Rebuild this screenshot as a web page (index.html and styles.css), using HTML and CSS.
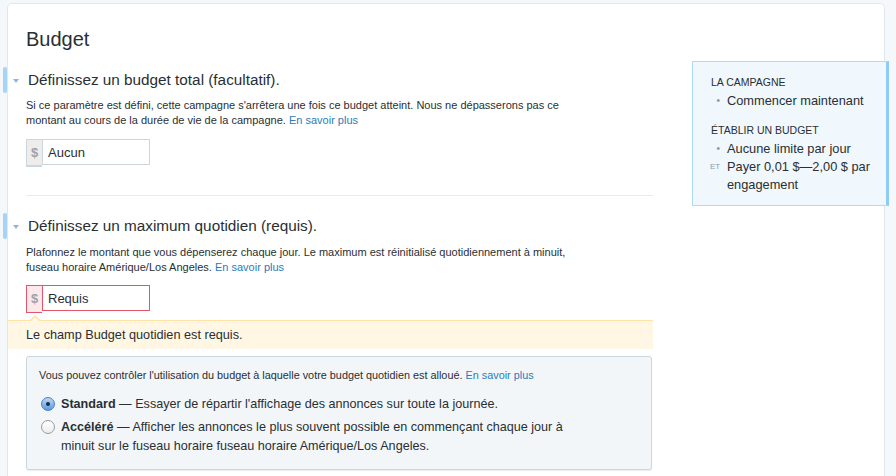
FILE: index.html
```html
<!DOCTYPE html>
<html lang="fr">
<head>
    <meta charset="UTF-8">
    <meta name="viewport" content="width=device-width, initial-scale=1.0">
    <title>Budget</title>
    <link rel="stylesheet" href="styles.css">
</head>
<body>
    <div class="card">
        <div class="card-body">
            <div class="main">
                <h1>Budget</h1>

                <div class="section">
                    <h2 class="section-title">Définissez un budget total (facultatif).</h2>
                    <p class="help">Si ce paramètre est défini, cette campagne s'arrêtera une fois ce budget atteint. Nous ne dépasserons pas ce montant au cours de la durée de vie de la campagne. <a href="#">En savoir plus</a></p>
                    <div class="money-input">
                        <span class="addon">$</span>
                        <input type="text" value="Aucun">
                    </div>
                </div>

                <hr class="divider">

                <div class="section section-daily">
                    <h2 class="section-title">Définissez un maximum quotidien (requis).</h2>
                    <p class="help">Plafonnez le montant que vous dépenserez chaque jour. Le maximum est réinitialisé quotidiennement à minuit, fuseau horaire Amérique/Los Angeles. <a href="#">En savoir plus</a></p>
                    <div class="money-input invalid">
                        <span class="addon">$</span>
                        <input type="text" value="Requis">
                    </div>
                </div>

                <div class="field-error">Le champ Budget quotidien est requis.</div>

                <div class="pacing">
                    <p class="pacing-intro">Vous pouvez contrôler l'utilisation du budget à laquelle votre budget quotidien est alloué. <a href="#">En savoir plus</a></p>
                    <label class="radio-row">
                        <span class="radio checked"></span>
                        <span><b>Standard</b> — Essayer de répartir l'affichage des annonces sur toute la journée.</span>
                    </label>
                    <label class="radio-row">
                        <span class="radio"></span>
                        <span><b>Accéléré</b> — Afficher les annonces le plus souvent possible en commençant chaque jour à minuit sur le fuseau horaire fuseau horaire Amérique/Los Angeles.</span>
                    </label>
                </div>
            </div>

            <aside class="summary">
                <h3>La campagne</h3>
                <ul>
                    <li><span class="mark">•</span>Commencer maintenant</li>
                </ul>
                <h3>Établir un budget</h3>
                <ul>
                    <li><span class="mark">•</span>Aucune limite par jour</li>
                    <li><span class="mark et">ET</span>Payer 0,01 $—2,00 $ par engagement</li>
                </ul>
            </aside>
        </div>
    </div>
</body>
</html>
```

FILE: styles.css
```css
body {
    font-family: "Liberation Sans", Arial, sans-serif;
    margin: 0;
    padding: 3px 11px 0 7px;
    background-color: #f5f8fa;
    color: #292f33;
}
a {
    color: #2b7bb9;
    text-decoration: none;
}
.card {
    background-color: white;
    border: 1px solid #e1e8ed;
    border-bottom: none;
    border-radius: 5px 5px 0 0;
    min-height: 480px;
}
.card-body {
    display: flex;
    align-items: flex-start;
}
.main {
    width: 645px;
    padding-top: 23px;
}
h1 {
    margin: 0 0 19px 18px;
    font-size: 20px;
    line-height: 24px;
    font-weight: normal;
}
.section {
    padding-left: 18px;
}
.section-title {
    position: relative;
    margin: 0 0 8px 2px;
    font-size: 15.3px;
    line-height: 20px;
    font-weight: normal;
}
/* blue marker on the card edge */
.section-title::before {
    content: "";
    position: absolute;
    left: -25px;
    top: -3px;
    width: 4px;
    height: 26px;
    border-radius: 2px;
    background-color: #a6d4f5;
}
/* collapse caret */
.section-title::after {
    content: "";
    position: absolute;
    left: -15px;
    top: 9px;
    border-left: 3.5px solid transparent;
    border-right: 3.5px solid transparent;
    border-top: 4px solid #8fb6d6;
}
.help {
    margin: 0;
    max-width: 545px;
    font-size: 11px;
    line-height: 14.5px;
}
.section-daily .help {
    margin-top: 9px;
}
.money-input {
    display: flex;
    align-items: flex-start;
    width: 124px;
    margin-top: 12px;
}
.section-daily .money-input {
    margin-top: 11px;
}
.addon {
    width: 16px;
    height: 27px;
    box-sizing: border-box;
    border: 1px solid #ccd6dd;
    border-right: none;
    background-color: #efecec;
    color: #99a4ad;
    font-weight: bold;
    font-size: 13px;
    line-height: 26px;
    text-align: center;
    margin-bottom: -2px;
    box-shadow: 0 1px 0 #ccd6dd;
}
.money-input input {
    flex: 1;
    min-width: 0;
    height: 26px;
    box-sizing: border-box;
    border: 1px solid #ccd6dd;
    padding: 0 5px;
    font-family: inherit;
    font-size: 13px;
    color: #292f33;
    outline: none;
}
.money-input.invalid .addon {
    border-color: #e0566b;
    background-color: #fde8ec;
    box-shadow: none;
    height: 28px;
}
.money-input.invalid input {
    border-color: #e0566b;
}
.divider {
    margin: 30px 0 20px 18px;
    border: none;
    border-top: 1px solid #e6ecf0;
}
.field-error {
    position: relative;
    margin-top: 9px;
    padding: 6px 18px 0;
    height: 22px;
    background-color: #fff6e4;
    border-top: 1px solid #fde3a6;
    font-size: 12.7px;
    line-height: 16px;
}
/* little notch pointing at the field */
.field-error::before {
    content: "";
    position: absolute;
    left: 22px;
    top: -6px;
    border-left: 5px solid transparent;
    border-right: 5px solid transparent;
    border-bottom: 5px solid #fde3a6;
}
.field-error::after {
    content: "";
    position: absolute;
    left: 23px;
    top: -4px;
    border-left: 4px solid transparent;
    border-right: 4px solid transparent;
    border-bottom: 4px solid #fff6e4;
}
.pacing {
    margin: 7px 1px 0 18px;
    padding: 11px 58px 13px 12px;
    background-color: #f3f6f9;
    border: 1px solid #ccd6dd;
    border-radius: 3px;
    box-shadow: 0 1px 1px rgba(0, 0, 0, 0.08);
}
.pacing-intro {
    margin: 0 0 12px;
    font-size: 10.85px;
    line-height: 15px;
    white-space: nowrap;
}
.radio-row {
    display: flex;
    align-items: flex-start;
    gap: 6px;
    font-size: 12.6px;
    line-height: 19px;
    margin-bottom: 4px;
}
.radio-row:last-child {
    margin-bottom: 0;
}
.radio-row b {
    font-weight: bold;
}
.radio {
    flex: none;
    position: relative;
    width: 14px;
    height: 14px;
    margin: 2px 0 0 2px;
    box-sizing: border-box;
    border: 1px solid #9a9a9a;
    border-radius: 50%;
    background: linear-gradient(#ffffff, #ececec);
}
.radio.checked {
    border-color: #4a7fbf;
    background: linear-gradient(#bcd8f6, #5c9ae3);
}
.radio.checked::after {
    content: "";
    position: absolute;
    left: 4px;
    top: 4px;
    width: 4px;
    height: 4px;
    border-radius: 50%;
    background-color: #1d2a38;
}
.summary {
    flex: none;
    width: 197px;
    box-sizing: border-box;
    margin: 57px -5px 0 auto;
    padding: 13px 12px 11px 18px;
    background-color: #f0f7fd;
    border: 1px solid #b2dbf7;
    border-right: 3px solid #8ecbf6;
}
.summary h3 {
    margin: 0 0 3px;
    font-size: 10.5px;
    line-height: 14px;
    font-weight: normal;
    text-transform: uppercase;
}
.summary ul {
    list-style: none;
    margin: 0 0 13px;
    padding: 0;
}
.summary ul:last-child {
    margin-bottom: 0;
}
.summary li {
    display: flex;
    font-size: 12.8px;
    line-height: 18px;
}
.mark {
    flex: none;
    width: 17px;
    margin-left: -1px;
    padding-right: 7px;
    box-sizing: border-box;
    text-align: right;
    color: #8899a6;
    font-size: 10px;
}
.mark.et {
    font-size: 8px;
    padding-right: 8px;
}
```
